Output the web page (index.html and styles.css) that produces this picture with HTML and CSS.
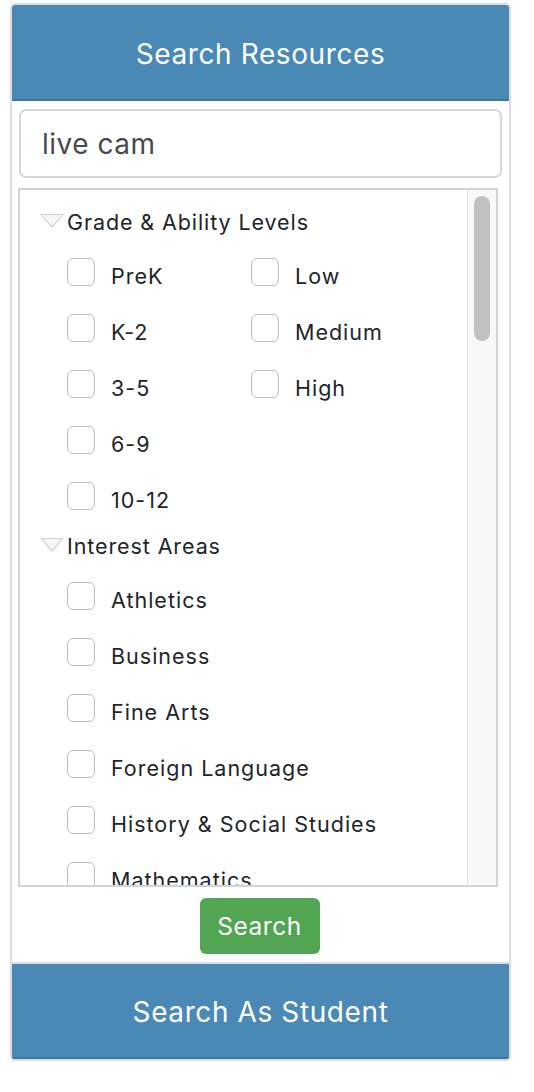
FILE: index.html
```html
<!DOCTYPE html>
<html lang="en">
  <head>
    <meta charset="UTF-8" />
    <meta name="viewport" content="width=device-width, initial-scale=1.0" />
    <title>Search Resources</title>
    <link rel="stylesheet" href="styles.css">
  </head>
  <body>
    <section id="panel">
      <div class="bar top">Search Resources</div>
      <form action="#" id="form">
        <input type="text" id="query" value="live cam" />
        <div class="listbox">
          <div class="list">
            <div class="group">
              <h3 class="grouphead"><span class="tri"></span>Grade &amp; Ability Levels</h3>
              <div class="cols">
                <div class="col">
                  <label class="row"><span class="box"></span><span class="text">PreK</span></label>
                  <label class="row"><span class="box"></span><span class="text">K-2</span></label>
                  <label class="row"><span class="box"></span><span class="text">3-5</span></label>
                  <label class="row"><span class="box"></span><span class="text">6-9</span></label>
                  <label class="row"><span class="box"></span><span class="text">10-12</span></label>
                </div>
                <div class="col">
                  <label class="row"><span class="box"></span><span class="text">Low</span></label>
                  <label class="row"><span class="box"></span><span class="text">Medium</span></label>
                  <label class="row"><span class="box"></span><span class="text">High</span></label>
                </div>
              </div>
            </div>
            <div class="group">
              <h3 class="grouphead"><span class="tri"></span>Interest Areas</h3>
              <div class="col">
                <label class="row"><span class="box"></span><span class="text">Athletics</span></label>
                <label class="row"><span class="box"></span><span class="text">Business</span></label>
                <label class="row"><span class="box"></span><span class="text">Fine Arts</span></label>
                <label class="row"><span class="box"></span><span class="text">Foreign Language</span></label>
                <label class="row"><span class="box"></span><span class="text">History &amp; Social Studies</span></label>
                <label class="row"><span class="box"></span><span class="text">Mathematics</span></label>
              </div>
            </div>
          </div>
          <div class="scrolltrack"><div class="thumb"></div></div>
        </div>
        <div class="actions">
          <button id="button" type="submit">Search</button>
        </div>
      </form>
      <div class="bar bottom">Search As Student</div>
    </section>
  </body>
</html>
```

FILE: styles.css
```css
* {
  margin: 0px;
  padding: 0px;
  box-sizing: border-box;
}
body {
  background-color: white;
  font-family: Inter, "Liberation Sans", sans-serif;
  color: #212529;
}
#panel {
  width: 501px;
  margin-left: 10px;
  margin-top: 3px;
  border: 2px solid #dddddd;
  border-radius: 5px;
  overflow: hidden;
  box-shadow: 0 1px 2px rgba(0, 0, 0, 0.08);
}
.bar {
  background-color: #4a89b5;
  color: white;
  text-align: center;
  font-size: 28px;
  letter-spacing: 0.6px;
  height: 96px;
  line-height: 98px;
  border-bottom: 2px solid #3f769d;
}
.bar.bottom {
  border-top: 2px solid #dddddd;
  height: 97px;
  line-height: 97px;
}
#form {
  padding: 8px 8px 0 6px;
}
#query {
  display: block;
  width: 483px;
  height: 69px;
  margin-left: 1px;
  border: 2px solid #d3d6da;
  border-radius: 7px;
  padding: 0 21px;
  font-family: inherit;
  font-size: 28px;
  letter-spacing: 0.5px;
  color: #464a4f;
}
#query:focus {
  outline: 0;
}
.listbox {
  display: flex;
  margin-top: 10px;
  width: 480px;
  height: 699px;
  border: 2px solid #cfd4d9;
  overflow: hidden;
}
.list {
  flex: 1;
  padding-top: 10px;
  padding-left: 20px;
}
.grouphead {
  display: flex;
  align-items: center;
  height: 44px;
  font-size: 21.5px;
  font-weight: normal;
  letter-spacing: 0.9px;
}
.tri {
  display: inline-block;
  width: 0;
  height: 0;
  margin-right: 3px;
  border-left: 12px solid transparent;
  border-right: 12px solid transparent;
  border-top: 14px solid #cfcfcf;
  position: relative;
  top: -1px;
}
.tri::after {
  content: "";
  position: absolute;
  left: -10px;
  top: -13px;
  border-left: 10px solid transparent;
  border-right: 10px solid transparent;
  border-top: 11.5px solid #f6f6f6;
}
.cols {
  display: flex;
}
.cols .col {
  width: 211px;
}
.col {
  padding-left: 27px;
}
.cols .col + .col {
  padding-left: 0;
}
.row {
  display: flex;
  align-items: center;
  height: 56px;
  font-size: 21.5px;
  letter-spacing: 1px;
  white-space: nowrap;
}
.text {
  padding-top: 8px;
}
.box {
  flex-shrink: 0;
  width: 28px;
  height: 28px;
  border: 1.5px solid #bdbdbd;
  border-radius: 6px;
  margin-right: 16px;
  background: white;
}
.scrolltrack {
  width: 29px;
  background-color: #f8f8f8;
  border-left: 1px solid #e6e6e6;
  padding: 6px 6px 0 6px;
}
.thumb {
  height: 145px;
  background-color: #c1c1c1;
  border-radius: 8px;
}
.actions {
  text-align: center;
  padding: 11px 0 8px 0;
}
button {
  width: 120px;
  height: 56px;
  border: 0;
  border-radius: 6px;
  background-color: #52a552;
  color: white;
  font-family: inherit;
  font-size: 24.5px;
  letter-spacing: 0.5px;
}
```
